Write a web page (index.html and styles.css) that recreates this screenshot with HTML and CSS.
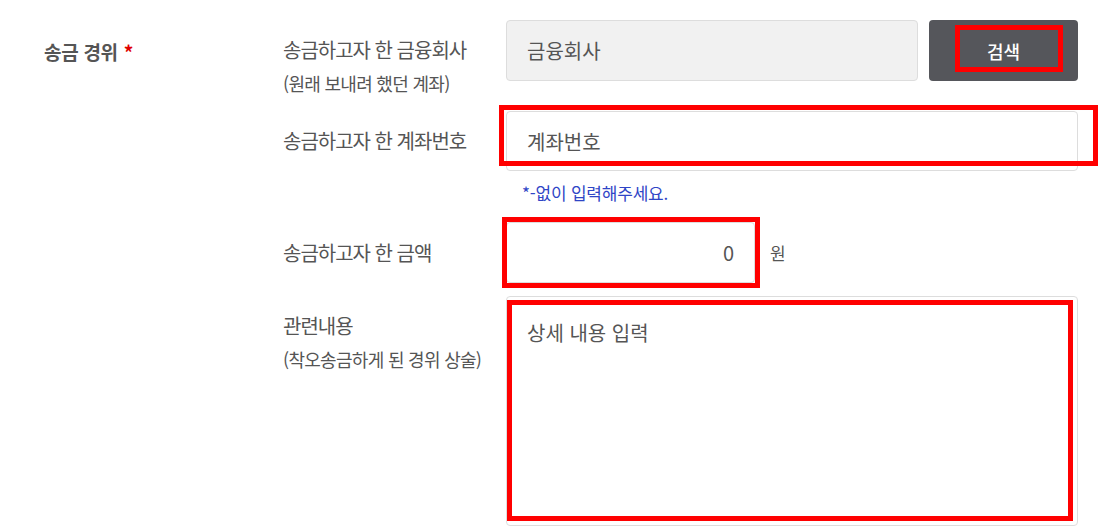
FILE: index.html
```html
<!DOCTYPE html>
<html lang="ko">
<head>
<meta charset="utf-8">
<title>송금 경위</title>
<link rel="stylesheet" href="styles.css">
</head>
<body>
<div class="page">
  <section class="section">
    <div class="title">송금 경위 <span class="req">*</span></div>
    <div class="fields">
      <div class="row row-top row-first">
        <div class="sublabel">송금하고자 한 금융회사<span class="sub2">(원래 보내려 했던 계좌)</span></div>
        <div class="control control-search">
          <input class="input input-gray" type="text" placeholder="금융회사" readonly>
          <button class="btn" type="button">검색</button>
        </div>
      </div>
      <div class="row row-acct">
        <div class="sublabel">송금하고자 한 계좌번호</div>
        <div class="control">
          <input class="input" type="text" placeholder="계좌번호">
        </div>
      </div>
      <p class="hint">*-없이 입력해주세요.</p>
      <div class="row row-amount">
        <div class="sublabel">송금하고자 한 금액</div>
        <div class="control control-amount">
          <input class="input input-amount" type="text" value="0">
          <span class="unit">원</span>
        </div>
      </div>
      <div class="row row-top row-text">
        <div class="sublabel">관련내용<span class="sub2">(착오송금하게 된 경위 상술)</span></div>
        <div class="control">
          <textarea class="textarea" placeholder="상세 내용 입력"></textarea>
        </div>
      </div>
    </div>
  </section>
  <div class="mark mark-btn"></div>
  <div class="mark mark-acct"></div>
  <div class="mark mark-amount"></div>
  <div class="mark mark-text"></div>
</div>
</body>
</html>
```

FILE: styles.css
```css
* { box-sizing: border-box; }
html, body { margin: 0; padding: 0; background: #fff; }
body {
  font-family: "Noto Sans CJK KR", "Noto Sans", sans-serif;
  color: #555;
  width: 1111px;
  height: 532px;
  overflow: hidden;
}
.page { position: relative; width: 1111px; height: 532px; }
.section {
  display: flex;
  padding: 20px 0 0 44px;
}
.title {
  width: 239px;
  flex: none;
  font-size: 19px;
  font-weight: 700;
  line-height: 26px;
  padding-top: 19px;
  color: #555;
  letter-spacing: -0.3px;
}
.req { color: #e00000; margin-left: 1px; }
.fields { width: 795px; display: flex; flex-direction: column; }
.row { display: flex; align-items: center; }
.row-top { align-items: flex-start; }
.sublabel {
  width: 223px;
  flex: none;
  font-size: 20px;
  line-height: 26px;
  letter-spacing: -1px;
  color: #555;
}
.row-top .sublabel { padding-top: 17px; }
.row-first .sublabel { height: 61px; }
.sub2 { display: block; margin-top: 7px; font-size: 18px; letter-spacing: -0.7px; }
.control { display: flex; align-items: center; width: 572px; }
.input {
  height: 61px;
  border: 1px solid #ddd;
  border-radius: 4px;
  background: #fff;
  font-family: inherit;
  font-size: 20px;
  color: #555;
  padding: 0 20px;
  outline: none;
  width: 100%;
}
.input::placeholder, .textarea::placeholder { color: #555; opacity: 1; }
.input-gray { background: #f1f1f1; width: 412px; flex: none; }
.btn {
  margin-left: 11px;
  width: 149px;
  height: 61px;
  flex: none;
  background: #55565b;
  border: none;
  border-radius: 4px;
  color: #fff;
  font-family: inherit;
  font-size: 18px;
  font-weight: 500;
}
.row-acct { margin-top: 30px; }
.row-acct .input { height: 60px; }
.hint {
  margin: 11px 0 0 239px;
  font-size: 17px;
  line-height: 22px;
  color: #2f45c6;
  letter-spacing: -0.2px;
}
.row-amount { margin-top: 18px; }
.input-amount { width: 249px; flex: none; text-align: right; }
.unit { margin-left: 15px; font-size: 17px; color: #555; }
.row-text { margin-top: 13px; }
.textarea {
  width: 572px;
  height: 230px;
  border: 1px solid #ddd;
  border-radius: 4px;
  padding: 23px 20px;
  font-family: inherit;
  font-size: 20px;
  line-height: 26px;
  color: #555;
  resize: none;
  outline: none;
}
.mark {
  position: absolute;
  border: 5px solid #ff0000;
  pointer-events: none;
}
.mark-btn { left: 955px; top: 25px; width: 108px; height: 47px; }
.mark-acct { left: 499px; top: 105px; width: 599px; height: 61px; }
.mark-amount { left: 502px; top: 217px; width: 258px; height: 71px; }
.mark-text { left: 507px; top: 300px; width: 566px; height: 221px; }
```
